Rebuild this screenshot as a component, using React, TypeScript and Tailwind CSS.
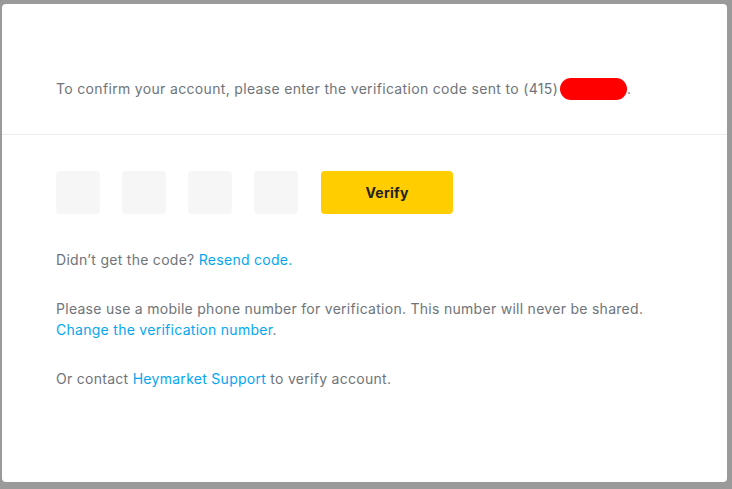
export default function App() {
  return (
    <div className="h-[489px] w-[732px] bg-[#9a9a9a] pt-[4px] pl-[2px] pr-[5px] pb-[7px] font-['Inter',sans-serif] tracking-[0.28px]">
      <div className="h-full w-full rounded-[4px] bg-white">
        {/* header */}
        <div className="border-b border-[#ececec] pl-[54px] pt-[74px] pb-[34px]">
          <p className="flex items-center text-[14px] leading-[20px] tracking-[0.33px] text-[#6f747a]">
            To confirm your account, please enter the verification code sent to (415)
            <span className="ml-[2px] inline-block h-[22px] w-[67px] rounded-full bg-[#ff0000]"></span>
            .
          </p>
        </div>

        {/* code inputs */}
        <div className="pl-[54px] pt-[36px]">
          <div className="flex items-center gap-[22px]">
            {[0, 1, 2, 3].map((i) => (
              <div key={i} className="h-[43px] w-[44px] rounded-[4px] bg-[#f6f6f6]"></div>
            ))}
            <button className="ml-[1px] h-[43px] w-[132px] rounded-[4px] bg-[#ffcd00] text-[14px] font-bold text-[#222]">
              Verify
            </button>
          </div>

          <p className="mt-[35px] text-[14px] leading-[21px] text-[#6f747a]">
            Didn’t get the code? <span className="text-[#05a6f0]">Resend code.</span>
          </p>

          <p className="mt-[28px] text-[14px] leading-[21px] text-[#6f747a]">
            Please use a mobile phone number for verification. This number will never be shared.
            <br />
            <span className="text-[#05a6f0]">Change the verification number</span>.
          </p>

          <p className="mt-[28px] text-[14px] leading-[21px] text-[#6f747a]">
            Or contact <span className="text-[#05a6f0]">Heymarket Support</span> to verify account.
          </p>
        </div>
      </div>
    </div>
  );
}
